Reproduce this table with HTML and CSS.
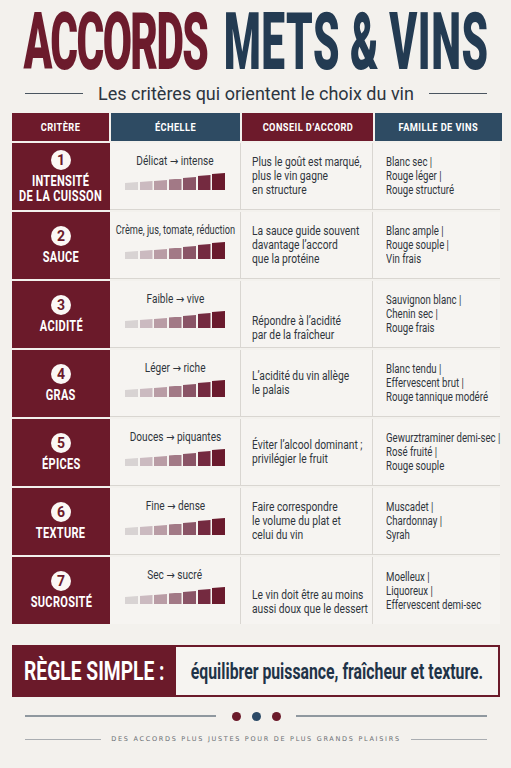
FILE: index.html
```html
<!DOCTYPE html>
<html lang="fr">
<head>
<meta charset="utf-8">
<title>Accords mets & vins</title>
<link rel="stylesheet" href="styles.css">
</head>
<body>
<div class="page">
  <header class="head">
    <h1 class="title"><span class="t-red">ACCORDS</span> <span class="t-navy">METS &amp; VINS</span></h1>
  </header>
  <div class="subtitle"><span class="line"></span><span class="sub-text">Les critères qui orientent le choix du vin</span><span class="line"></span></div>

  <div class="table">
    <div class="thead">
      <div class="th red"><span class="sx">CRITÈRE</span></div>
      <div class="th navy"><span class="sx">ÉCHELLE</span></div>
      <div class="th red"><span class="sx">CONSEIL D’ACCORD</span></div>
      <div class="th navy"><span class="sx">FAMILLE DE VINS</span></div>
    </div>

    <div class="row">
      <div class="crit"><span class="num">1</span><span class="lab">INTENSITÉ<br>DE LA CUISSON</span></div>
      <div class="scale"><div class="sc-text">Délicat <span class="arr">→</span> intense</div><div class="bars"><i></i><i></i><i></i><i></i><i></i><i></i><i></i></div></div>
      <div class="advice"><span class="tx">Plus le goût est marqué,<br>plus le vin gagne<br>en structure</span></div>
      <div class="wines"><span class="tx">Blanc sec |<br>Rouge léger |<br>Rouge structuré</span></div>
    </div>

    <div class="row">
      <div class="crit"><span class="num">2</span><span class="lab">SAUCE</span></div>
      <div class="scale"><div class="sc-text narrow">Crème, jus, tomate, réduction</div><div class="bars"><i></i><i></i><i></i><i></i><i></i><i></i><i></i></div></div>
      <div class="advice"><span class="tx">La sauce guide souvent<br>davantage l’accord<br>que la protéine</span></div>
      <div class="wines"><span class="tx">Blanc ample |<br>Rouge souple |<br>Vin frais</span></div>
    </div>

    <div class="row">
      <div class="crit"><span class="num">3</span><span class="lab">ACIDITÉ</span></div>
      <div class="scale"><div class="sc-text">Faible <span class="arr">→</span> vive</div><div class="bars"><i></i><i></i><i></i><i></i><i></i><i></i><i></i></div></div>
      <div class="advice low"><span class="tx">Répondre à l’acidité<br>par de la fraîcheur</span></div>
      <div class="wines"><span class="tx">Sauvignon blanc |<br>Chenin sec |<br>Rouge frais</span></div>
    </div>

    <div class="row">
      <div class="crit"><span class="num">4</span><span class="lab">GRAS</span></div>
      <div class="scale"><div class="sc-text">Léger <span class="arr">→</span> riche</div><div class="bars"><i></i><i></i><i></i><i></i><i></i><i></i><i></i></div></div>
      <div class="advice"><span class="tx">L’acidité du vin allège<br>le palais</span></div>
      <div class="wines"><span class="tx">Blanc tendu |<br>Effervescent brut |<br>Rouge tannique modéré</span></div>
    </div>

    <div class="row">
      <div class="crit"><span class="num">5</span><span class="lab">ÉPICES</span></div>
      <div class="scale"><div class="sc-text">Douces <span class="arr">→</span> piquantes</div><div class="bars"><i></i><i></i><i></i><i></i><i></i><i></i><i></i></div></div>
      <div class="advice"><span class="tx">Éviter l’alcool dominant ;<br>privilégier le fruit</span></div>
      <div class="wines"><span class="tx">Gewurztraminer demi-sec |<br>Rosé fruité |<br>Rouge souple</span></div>
    </div>

    <div class="row">
      <div class="crit"><span class="num">6</span><span class="lab">TEXTURE</span></div>
      <div class="scale"><div class="sc-text">Fine <span class="arr">→</span> dense</div><div class="bars"><i></i><i></i><i></i><i></i><i></i><i></i><i></i></div></div>
      <div class="advice"><span class="tx">Faire correspondre<br>le volume du plat et<br>celui du vin</span></div>
      <div class="wines"><span class="tx">Muscadet |<br>Chardonnay |<br>Syrah</span></div>
    </div>

    <div class="row last">
      <div class="crit"><span class="num">7</span><span class="lab">SUCROSITÉ</span></div>
      <div class="scale"><div class="sc-text">Sec <span class="arr">→</span> sucré</div><div class="bars"><i></i><i></i><i></i><i></i><i></i><i></i><i></i></div></div>
      <div class="advice low2"><span class="tx">Le vin doit être au moins<br>aussi doux que le dessert</span></div>
      <div class="wines"><span class="tx">Moelleux |<br>Liquoreux |<br>Effervescent demi-sec</span></div>
    </div>
  </div>

  <div class="rule">
    <div class="rule-lab"><span class="rl">RÈGLE SIMPLE :</span></div>
    <div class="rule-text"><span class="rt">équilibrer puissance, fraîcheur et texture.</span></div>
  </div>

  <div class="dots"><span class="dline"></span><span class="dot r"></span><span class="dot n"></span><span class="dot r"></span><span class="dline"></span></div>

  <div class="footer"><span class="fline"></span><span class="ftext">DES ACCORDS PLUS JUSTES POUR DE PLUS GRANDS PLAISIRS</span><span class="fline"></span></div>
</div>
</body>
</html>
```

FILE: styles.css
```css
* { box-sizing: border-box; }
html, body { margin: 0; padding: 0; }
body {
  background: #f3f1ed;
  font-family: Roboto, "Liberation Sans", sans-serif;
  color: #2a2f36;
  width: 511px;
  height: 768px;
  overflow: hidden;
}
.page { padding: 0 11px 0 12px; }

.head {
  height: 82px;
  display: flex;
  justify-content: center;
  align-items: flex-start;
  padding-top: 3px;
}
.title {
  margin: 0;
  font-family: Roboto, "Liberation Sans", sans-serif;
  font-weight: 900;
  font-size: 42.4px;
  line-height: 42.4px;
  white-space: nowrap;
  flex: none;
  transform: scaleY(1.887);
  transform-origin: center top;
  letter-spacing: 0.53px;
  word-spacing: -1px;
}
.t-red { color: #6c1b2c; letter-spacing: -1.6px; margin-right: 6.4px; }
.t-navy { color: #233b52; }

.subtitle {
  display: flex;
  align-items: center;
  gap: 15px;
  padding: 0 13px;
  height: 22px;
}
.subtitle .line { flex: 1; height: 1px; background: #4a5560; }
.sub-text {
  font-size: 18px;
  color: #2c3540;
  white-space: nowrap;
}

.sx, .tx, .lab, .sc-text, .rl, .rt {
  display: inline-block;
  white-space: nowrap;
}

.table { margin-top: 9px; }
.thead {
  display: grid;
  grid-template-columns: 97px 129px 131px 127px;
  column-gap: 2px;
  height: 28px;
}
.th {
  display: flex;
  align-items: center;
  justify-content: center;
  color: #fff;
  font-weight: 700;
  font-size: 11px;
  letter-spacing: 0.5px;
}
.th .sx { transform: scaleX(0.84); }
.th.red { background: #6d1a2b; }
.th.navy { background: #2e4b63; }

.row {
  display: grid;
  grid-template-columns: 98px 131px 132px 127px;
  height: 69px;
  border-top: 2px solid #f3f1ed;
}
.row .scale, .row .advice, .row .wines {
  background: #f6f4f1;
  border-bottom: 1px solid #d9d6d1;
  min-width: 0;
}
.row.last .scale, .row.last .advice, .row.last .wines { border-bottom: none; }
.crit {
  background: #6b1a2a;
  display: flex;
  flex-direction: column;
  align-items: center;
  justify-content: center;
  gap: 4px;
  color: #fff;
}
.num {
  width: 20px;
  height: 20px;
  border-radius: 50%;
  background: #fbf8f5;
  color: #6b1a2a;
  font-weight: 700;
  font-size: 14px;
  display: flex;
  align-items: center;
  justify-content: center;
}
.lab {
  font-weight: 700;
  font-size: 14.5px;
  line-height: 15px;
  text-align: center;
  letter-spacing: 0.4px;
  transform: scaleX(0.76);
}
.scale {
  border-right: 1px solid #d9d6d1;
  display: flex;
  flex-direction: column;
  align-items: center;
  padding-top: 11px;
}
.sc-text {
  font-size: 12px;
  line-height: 14px;
  color: #2f353c;
  transform: scaleX(0.84);
}
.sc-text.narrow { transform: scaleX(0.77); }
.arr {
  font-family: "DejaVu Sans", sans-serif;
  font-size: 12px;
}
.bars {
  display: flex;
  align-items: flex-end;
  gap: 1.5px;
  margin-top: 5px;
  height: 17px;
}
.bars i {
  display: block;
  width: 13px;
  clip-path: polygon(0 1px, 100% 0, 100% 100%, 0 100%);
}
.bars i:nth-child(1) { height: 8px; background: #d8d3d3; }
.bars i:nth-child(2) { height: 9px; background: #cbbac0; }
.bars i:nth-child(3) { height: 10px; background: #b99ca5; }
.bars i:nth-child(4) { height: 11.5px; background: #a27986; }
.bars i:nth-child(5) { height: 13px; background: #8a5466; }
.bars i:nth-child(6) { height: 15px; background: #742a40; }
.bars i:nth-child(7) { height: 17px; background: #6a1a2d; }

.advice, .wines {
  display: flex;
  align-items: center;
  font-size: 12.5px;
  line-height: 14px;
  color: #2f353c;
}
.advice { border-right: 1px solid #d9d6d1; padding-left: 11px; }
.wines { padding-left: 13px; }
.tx { transform-origin: left center; }
.advice .tx { transform: scaleX(0.82); }
.wines .tx { transform: scaleX(0.77); }
.advice.low { padding-top: 28px; }
.advice.low2 { padding-top: 22px; }

.rule {
  margin-top: 21px;
  display: flex;
  height: 52px;
  background: #6b1a2a;
  padding: 2px 2px 2px 0;
}
.rule-lab {
  width: 164px;
  flex: none;
  display: flex;
  align-items: center;
  justify-content: center;
  color: #fff;
  font-weight: 700;
  font-size: 25px;
}
.rl { transform: scaleX(0.77); }
.rule-text {
  flex: 1;
  min-width: 0;
  background: #f6f4f1;
  display: flex;
  align-items: center;
  justify-content: center;
  color: #1f3348;
  font-weight: 700;
  font-size: 15.8px;
}
.rt { transform: scaleY(1.39); flex: none; }

.dots {
  display: flex;
  align-items: center;
  padding: 0 13px;
  margin-top: 14px;
  height: 10px;
}
.dline { flex: 1; height: 2px; background: #8f989f; }
.dot { width: 9px; height: 9px; border-radius: 50%; margin: 0 5.5px; }
.dots .dline:first-child { margin-right: 10px; }
.dots .dline:last-child { margin-left: 10px; }
.dot.r { background: #6b1a2a; }
.dot.n { background: #2b4a66; }

.footer {
  display: flex;
  align-items: center;
  padding: 0 13px;
  margin-top: 13px;
  height: 10px;
}
.fline { flex: 1; height: 1px; background: #a9adb1; }
.ftext {
  font-family: "DejaVu Sans", sans-serif;
  font-size: 6.5px;
  letter-spacing: 1.7px;
  color: #6a6f74;
  padding: 0 10px;
  white-space: nowrap;
}
```
